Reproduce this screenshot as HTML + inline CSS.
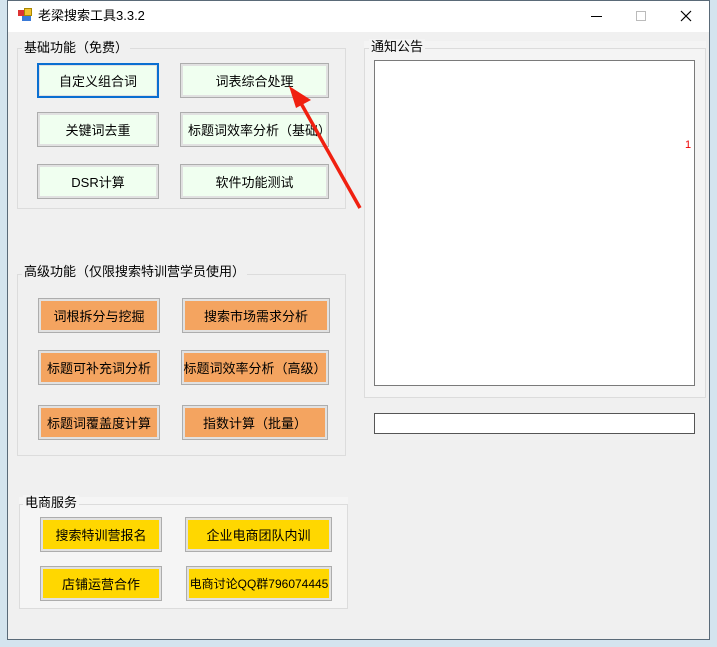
<!DOCTYPE html>
<html><head><meta charset="utf-8"><style>
*{margin:0;padding:0;box-sizing:border-box}
body{width:717px;height:647px;overflow:hidden;background:#d4e4ee;font-family:"Liberation Sans","Noto Sans CJK SC",sans-serif;font-size:13px;color:#000;position:relative}
.win{position:absolute;left:7px;top:0;width:703px;height:640px;background:#f0f0f0;border:1px solid #5a6a78}
.title{position:absolute;left:0;top:0;width:701px;height:31px;background:#fff}
.abs{position:absolute}
.grp{position:absolute;border:1px solid #dcdcdc}
.lbl{position:absolute;background:#f0f0f0;padding:0 2px;line-height:16px;white-space:nowrap}
.btn{position:absolute;border:1px solid #adadad;padding:2px;background:#e1e1e1}
.btn div{width:100%;height:100%;display:flex;align-items:center;justify-content:center;white-space:nowrap}
.g div{background:#f0fff0}
.o div{background:#f4a460}
.y div{background:#ffd700}
</style></head><body>
<div class="win">
<div class="title">
 <div class="abs" style="left:10px;top:9px;width:6px;height:6px;background:#d33"></div>
 <div class="abs" style="left:16px;top:7px;width:8px;height:8px;background:#f2c230;border:1px solid #a80"></div>
 <div class="abs" style="left:14px;top:15px;width:9px;height:5px;background:#3a7ad8"></div>
 <div class="abs" style="left:30px;top:6px;line-height:18px">老梁搜索工具3.3.2</div>
 <div class="abs" style="left:583px;top:15px;width:11px;height:1px;background:#000"></div>
 <div class="abs" style="left:628px;top:10px;width:10px;height:10px;border:1px solid #bbb"></div>
 <svg class="abs" style="left:672px;top:9px" width="12" height="12"><path d="M1 1L11 11M11 1L1 11" stroke="#000" stroke-width="1.2"/></svg>
</div>
</div>

<div class="grp" style="left:17px;top:48px;width:329px;height:161px"></div>
<div class="lbl" style="left:22px;top:40px">基础功能（免费）</div>
<div class="btn g" style="left:37px;top:63px;width:122px;height:35px;border:2px solid #0a6fd1;padding:1px"><div>自定义组合词</div></div>
<div class="btn g" style="left:180px;top:63px;width:149px;height:35px"><div>词表综合处理</div></div>
<div class="btn g" style="left:37px;top:112px;width:122px;height:35px"><div>关键词去重</div></div>
<div class="btn g" style="left:180px;top:112px;width:149px;height:35px"><div style="justify-content:flex-start;overflow:hidden;padding-left:5px">标题词效率分析（基础）</div></div>
<div class="btn g" style="left:37px;top:164px;width:122px;height:35px"><div>DSR计算</div></div>
<div class="btn g" style="left:180px;top:164px;width:149px;height:35px"><div>软件功能测试</div></div>

<div class="grp" style="left:17px;top:274px;width:329px;height:182px"></div>
<div class="lbl" style="left:22px;top:264px">高级功能（仅限搜索特训营学员使用）</div>
<div class="btn o" style="left:38px;top:298px;width:122px;height:35px"><div>词根拆分与挖掘</div></div>
<div class="btn o" style="left:182px;top:298px;width:148px;height:35px"><div>搜索市场需求分析</div></div>
<div class="btn o" style="left:38px;top:350px;width:122px;height:35px"><div>标题可补充词分析</div></div>
<div class="btn o" style="left:181px;top:350px;width:148px;height:35px"><div>标题词效率分析（高级）</div></div>
<div class="btn o" style="left:38px;top:405px;width:122px;height:35px"><div>标题词覆盖度计算</div></div>
<div class="btn o" style="left:182px;top:405px;width:146px;height:35px"><div>指数计算（批量）</div></div>

<div class="abs" style="left:19px;top:497px;width:329px;height:112px;background:#f5f5f5"></div>
<div class="grp" style="left:19px;top:504px;width:329px;height:105px"></div>
<div class="lbl" style="left:23px;top:495px;background:#f5f5f5">电商服务</div>
<div class="btn y" style="left:40px;top:517px;width:122px;height:35px"><div>搜索特训营报名</div></div>
<div class="btn y" style="left:185px;top:517px;width:147px;height:35px"><div>企业电商团队内训</div></div>
<div class="btn y" style="left:40px;top:566px;width:122px;height:35px"><div>店铺运营合作</div></div>
<div class="btn y" style="left:186px;top:566px;width:146px;height:35px"><div style="font-size:12px">电商讨论QQ群796074445</div></div>

<div class="abs" style="left:364px;top:41px;width:342px;height:357px;background:#f4f4f4"></div>
<div class="grp" style="left:364px;top:48px;width:342px;height:350px"></div>
<div class="lbl" style="left:369px;top:39px;background:#f4f4f4">通知公告</div>
<div class="abs" style="left:374px;top:60px;width:321px;height:326px;background:#fff;border:1px solid #7a7a7a"></div>
<div class="abs" style="left:685px;top:139px;color:#e00;font-size:11px">1</div>
<div class="abs" style="left:374px;top:413px;width:321px;height:21px;background:#fff;border:1px solid #555"></div>

<svg class="abs" style="left:0;top:0" width="717" height="647">
<path d="M360 208L298 98" stroke="#f02010" stroke-width="3.5" fill="none"/>
<path d="M289 86L311 100L296 108Z" fill="#f02010"/>
</svg>
</body></html>
